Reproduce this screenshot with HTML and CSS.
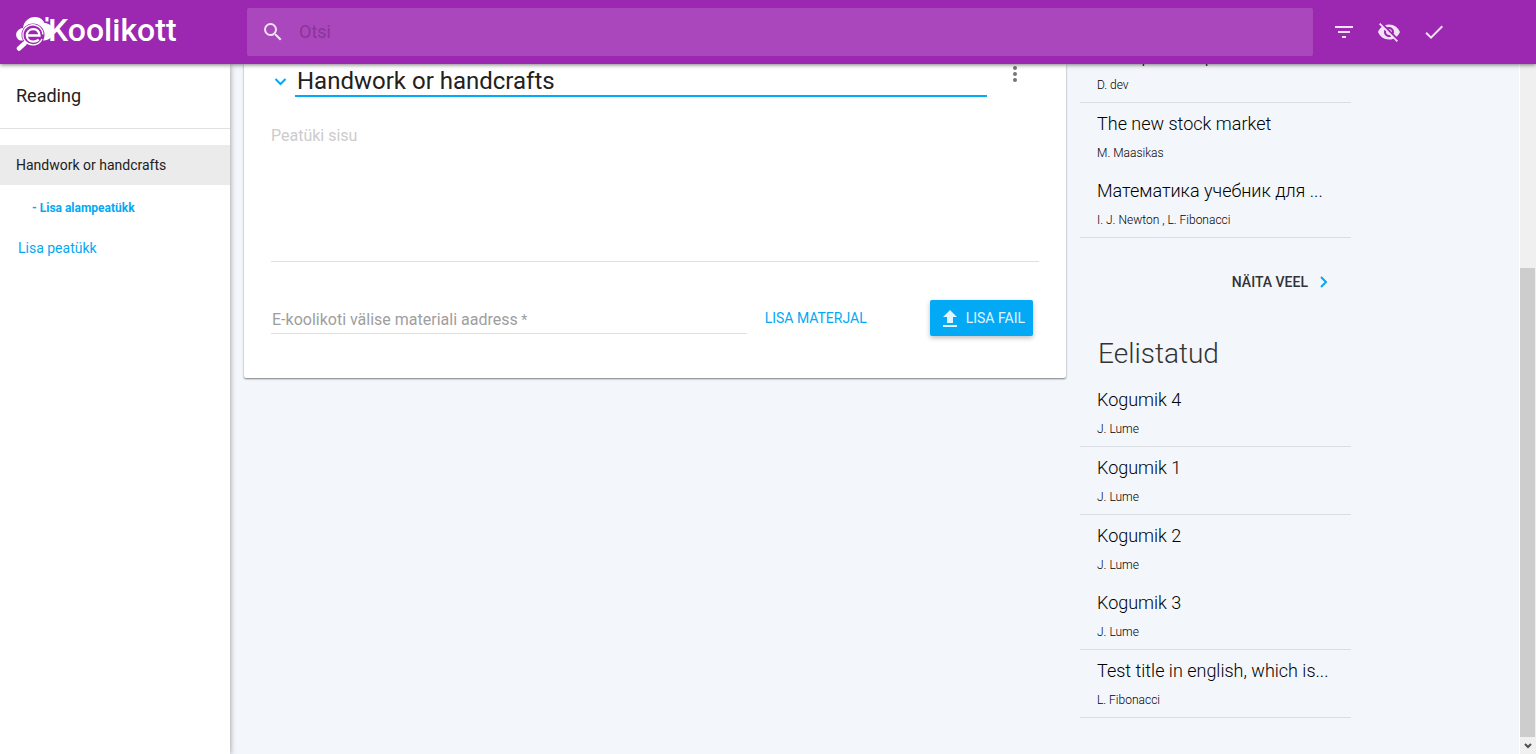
FILE: index.html
```html
<!DOCTYPE html>
<html lang="et">
<head>
<meta charset="utf-8">
<title>e-Koolikott</title>
<link rel="stylesheet" href="styles.css">
</head>
<body>
<header class="topbar">
  <a class="logo" href="#" aria-label="eKoolikott">
    <svg class="logo-mark" viewBox="0 0 38 38" aria-hidden="true">
      <path fill="#fff" d="M4 25.500C0 24 -1 19 1.500 16 3 14 5 13 7 13 8 6 13 2 18.500 2c5 0 8 2 10 6 5 0 8.500 4 8.500 8.500 0 5-4 9-9 9z"/>
      <circle cx="17" cy="20" r="11.500" fill="#9c27b0"/>
      <path d="M26 24a10 10 0 1 1 .9-4.500M25 26a10 10 0 0 1-12 3" fill="none" stroke="#fff" stroke-width="1.300"/>
      <path d="M11.500 20.500h12c0-4-2.500-6.300-6.200-6.300s-6.500 2.600-6.500 6.300 2.800 6.200 6.500 6.200c2.400 0 4-.7 5.400-2" fill="none" stroke="#fff" stroke-width="2.300"/>
      <path d="M8.500 28.500l-5.500 5" stroke="#fff" stroke-width="4.500" stroke-linecap="round"/>
      <path d="M31 2v4.500" stroke="#fff" stroke-width="3"/>
    </svg>
    <span class="logo-text">Koolikott</span>
  </a>
  <form class="search" role="search">
    <svg class="icon" viewBox="0 0 24 24" aria-hidden="true"><path d="M15.500 14h-.79l-.28-.27A6.470 6.470 0 0 0 16 9.500 6.500 6.500 0 1 0 9.500 16c1.610 0 3.090-.59 4.230-1.570l.27.28v.79l5 4.990L20.490 19l-4.990-5zm-6 0C7.010 14 5 11.990 5 9.500S7.010 5 9.500 5 14 7.010 14 9.500 11.990 14 9.500 14z"/></svg>
    <input class="search-input" type="search" placeholder="Otsi" aria-label="Otsi">
  </form>
  <nav class="actions">
    <button class="icon-button" type="button" aria-label="Filter"><svg class="icon" viewBox="0 0 24 24"><path d="M10 18h4v-2h-4v2zM3 6v2h18V6H3zm3 7h12v-2H6v2z"/></svg></button>
    <button class="icon-button" type="button" aria-label="Nähtavus"><svg class="icon" viewBox="0 0 24 24"><path d="M12 7c2.760 0 5 2.240 5 5 0 .65-.13 1.260-.36 1.830l2.920 2.920c1.510-1.260 2.700-2.890 3.430-4.750-1.730-4.390-6-7.500-11-7.500-1.400 0-2.740.25-3.980.7l2.160 2.160C10.740 7.130 11.350 7 12 7zM2 4.270l2.280 2.280.46.46C3.080 8.300 1.780 10.020 1 12c1.730 4.390 6 7.500 11 7.500 1.550 0 3.030-.3 4.380-.84l.42.42L19.730 22 21 20.730 3.270 3 2 4.270zM7.530 9.800l1.550 1.550c-.05.21-.08.43-.08.65 0 1.660 1.340 3 3 3 .22 0 .44-.03.65-.08l1.550 1.550c-.67.33-1.410.53-2.200.53-2.760 0-5-2.240-5-5 0-.79.2-1.530.53-2.200zm4.310-.78l3.150 3.150.02-.16c0-1.660-1.340-3-3-3l-.17.01z"/></svg></button>
    <button class="icon-button" type="button" aria-label="Salvesta"><svg class="icon" viewBox="0 0 24 24"><path d="M9 16.170L4.830 12l-1.420 1.410L9 19 21 7l-1.410-1.410z"/></svg></button>
  </nav>
</header>
<div class="layout">
  <nav class="sidebar">
    <h1 class="sidebar-title">Reading</h1>
    <a class="chapter" href="#">Handwork or handcrafts</a>
    <a class="add-sub" href="#">- Lisa alampeatükk</a>
    <a class="add-chapter" href="#">Lisa peatükk</a>
  </nav>
  <main class="page">
    <section class="card">
      <div class="chapter-head">
        <button class="toggle" type="button" aria-label="Ava"><svg viewBox="0 0 12 8"><path d="M1 1l5 5 5-5" fill="none" stroke="#03a9f4" stroke-width="2"/></svg></button>
        <input class="chapter-title" value="Handwork or handcrafts" aria-label="Peatüki pealkiri">
        <button class="more" type="button" aria-label="Menüü"><svg viewBox="2 2 20 20"><path d="M12 8a2 2 0 1 0 0-4 2 2 0 0 0 0 4zm0 2a2 2 0 1 0 0 4 2 2 0 0 0 0-4zm0 6a2 2 0 1 0 0 4 2 2 0 0 0 0-4z"/></svg></button>
      </div>
      <textarea class="content" placeholder="Peatüki sisu" aria-label="Peatüki sisu"></textarea>
      <div class="material">
        <div class="field">
          <label class="label" for="address">E-koolikoti välise materiali aadress<span class="star"> *</span></label>
          <input class="address" id="address" type="text">
        </div>
        <button class="flat" type="button">LISA MATERJAL</button>
        <button class="raised" type="button"><svg viewBox="0 0 24 24" aria-hidden="true"><path d="M5 21h14v-2H5v2zM5 11h4v6h6v-6h4l-7-7z"/></svg>LISA FAIL</button>
      </div>
    </section>
    <aside class="aside">
      <ul class="list list-top">
        <li class="item"><a class="item-title" href="#">Example comp</a><span class="author">D. dev</span></li>
        <li class="item no-line"><a class="item-title" href="#">The new stock market</a><span class="author">M. Maasikas</span></li>
        <li class="item"><a class="item-title" href="#">Математика учебник для ...</a><span class="author">I. J. Newton , L. Fibonacci</span></li>
      </ul>
      <button class="show-more" type="button">NÄITA VEEL<svg viewBox="0 0 8 12" aria-hidden="true"><path d="M1 1l5 5-5 5" fill="none" stroke="#03a9f4" stroke-width="2"/></svg></button>
      <h2 class="aside-title">Eelistatud</h2>
      <ul class="list">
        <li class="item"><a class="item-title" href="#">Kogumik 4</a><span class="author">J. Lume</span></li>
        <li class="item"><a class="item-title" href="#">Kogumik 1</a><span class="author">J. Lume</span></li>
        <li class="item no-line"><a class="item-title" href="#">Kogumik 2</a><span class="author">J. Lume</span></li>
        <li class="item"><a class="item-title" href="#">Kogumik 3</a><span class="author">J. Lume</span></li>
        <li class="item"><a class="item-title" href="#">Test title in english, which is...</a><span class="author">L. Fibonacci</span></li>
      </ul>
    </aside>
  </main>
  <div class="scrollbar" aria-hidden="true">
    <div class="thumb"></div>
    <div class="scroll-arrow"><svg viewBox="0 0 8 6"><path d="M1 1l3 3 3-3" fill="none" stroke="#505050" stroke-width="2"/></svg></div>
  </div>
</div>
</body>
</html>
```
FILE: styles.css
```css
* { box-sizing: border-box; }
body {
  margin: 0;
  height: 100vh;
  display: flex;
  flex-direction: column;
  overflow: hidden;
  background: #f3f6fb;
  color: #212121;
  font: 14px/20px Roboto, sans-serif;
}
button, input, textarea { font: inherit; color: inherit; border: 0; padding: 0; background: none; outline: 0; }
a { color: inherit; text-decoration: none; }
svg { display: block; flex: none; }

.topbar {
  z-index: 2;
  flex: none;
  height: 64px;
  display: flex;
  align-items: center;
  background: #9c27b0;
  box-shadow: 0 1px 4px rgba(0,0,0,.5);
}
.logo { width: 247px; padding-left: 16px; display: flex; align-items: center; color: #fff; }
.logo-mark { width: 38px; height: 38px; margin-top: 4px; }
.logo-text { margin: 0 0 4px -6px; font-size: 32px; line-height: 40px; font-weight: 500; }
.search {
  flex: 1;
  height: 48px;
  display: flex;
  align-items: center;
  gap: 14px;
  padding: 0 14px;
  border-radius: 2px;
  background: #ab47bc;
}
.icon { width: 24px; height: 24px; fill: #f3e2f6; }
.search-input { flex: 1; font-size: 18px; line-height: 24px; }
.search-input::placeholder { color: #8a3599; opacity: 1; }
.actions { width: 223px; padding-left: 19px; display: flex; gap: 21px; }

.layout { flex: 1; min-height: 0; display: flex; }
.sidebar {
  z-index: 1;
  flex: none;
  width: 230px;
  display: flex;
  flex-direction: column;
  background: #fff;
  box-shadow: 0 1px 6px rgba(0,0,0,.4);
}
.sidebar-title {
  margin: 0 0 16px;
  padding: 20px 16px;
  border-bottom: 1px solid #e0e0e0;
  font-size: 18px;
  line-height: 24px;
  font-weight: 400;
}
.chapter { padding: 10px 16px; background: #ebebeb; }
.add-sub { padding: 15px 32px 10px; color: #03a9f4; font-size: 12px; line-height: 16px; font-weight: 700; }
.add-chapter { padding: 12px 18px; color: #03a9f4; }

.page { flex: 1; min-width: 0; display: flex; align-items: flex-start; gap: 14px; padding: 0 168px 0 14px; overflow: hidden; }
.card {
  flex: 1;
  min-width: 0;
  padding: 0 27px 42px;
  background: #fff;
  border-radius: 0 0 2px 2px;
  box-shadow: 0 1px 2px rgba(0,0,0,.5);
}
.chapter-head { display: flex; align-items: flex-start; }
.toggle { width: 24px; padding: 14px 3px; }
.toggle svg { width: 13px; height: 8px; }
.chapter-title { flex: 1; min-width: 0; height: 33px; padding: 3px 2px 0; border-bottom: 2px solid #03a9f4; font-size: 24px; line-height: 28px; }
.more { width: 52px; padding-left: 16px; }
.more svg { width: 24px; height: 20px; fill: #757575; }
.content {
  display: block;
  width: 100%;
  height: 137px;
  margin-top: 25px;
  border-bottom: 1px solid #e0e0e0;
  resize: none;
  font-size: 16px;
  line-height: 22px;
}
.content::placeholder { color: #ccc; opacity: 1; }
.material { display: flex; align-items: center; margin-top: 38px; padding-right: 6px; }
.field { flex: 1; display: grid; }
.label, .address { grid-area: 1 / 1; }
.label { padding: 9px 1px 5px; color: #9e9e9e; font-size: 16px; line-height: 20px; }
.star { font-size: 14px; vertical-align: top; }
.address { width: 100%; height: 33px; border-bottom: 1px solid #e0e0e0; }
.flat { margin: 0 63px 0 18px; color: #03a9f4; }
.raised {
  display: flex;
  align-items: center;
  gap: 4px;
  height: 36px;
  padding: 0 8px;
  border-radius: 2px;
  background: #03a9f4;
  color: #e1f5fe;
  box-shadow: 0 2px 5px rgba(0,0,0,.26);
}
.raised svg { width: 24px; height: 24px; fill: #e1f5fe; }

.aside { flex: none; width: 271px; display: flex; flex-direction: column; }
.list { margin: 0; padding: 0; list-style: none; }
.list-top { margin-top: -29px; }
.item { display: flex; flex-direction: column; gap: 9px; padding: 9px 17px; border-bottom: 1px solid #dadde2; color: #000; }
.no-line { border-bottom: 0; }
.item-title { font-size: 18px; line-height: 24px; font-weight: 300; white-space: nowrap; }
.author { font-size: 12px; line-height: 16px; font-weight: 300; }
.show-more { align-self: flex-end; display: flex; align-items: center; gap: 12px; margin: 26px 23px 0 0; height: 36px; font-weight: 500; color: #333; }
.show-more svg { width: 8px; height: 12px; }
.aside-title { margin: 38px 0 9px 18px; font-size: 28px; line-height: 32px; font-weight: 300; color: #333; }

.scrollbar { flex: none; width: 17px; display: flex; flex-direction: column; padding-top: 204px; background: #f0f0f0; border-left: 1px solid #fff; }
.thumb { flex: 1; margin-right: 1px; background: #cdcdcd; }
.scroll-arrow { height: 17px; display: grid; place-items: center; }
.scroll-arrow svg { width: 8px; height: 6px; }
```
